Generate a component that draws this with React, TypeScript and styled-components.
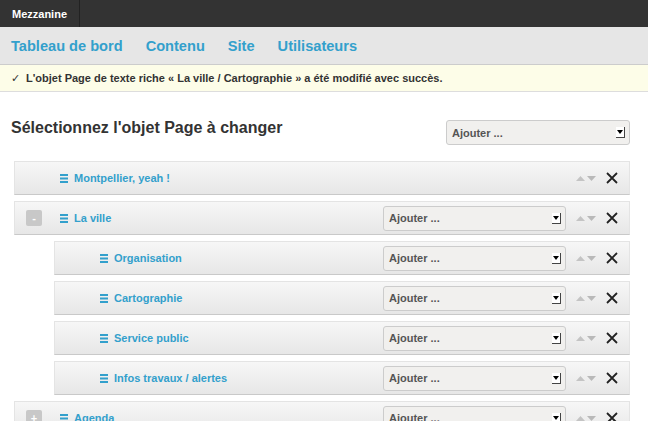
import React from "react";
import styled, { createGlobalStyle } from "styled-components";

const GlobalStyle = createGlobalStyle`
  html, body {
    margin: 0;
    padding: 0;
    background: #fff;
    font-family: "Liberation Sans", Arial, sans-serif;
  }
`;

const LINK = "#33a0cc";

const TopBar = styled.div`
  height: 27px;
  background: #333;
  display: flex;
  align-items: stretch;
`;

const Brand = styled.div`
  display: flex;
  align-items: center;
  padding: 0 12px;
  color: #fff;
  font-size: 11px;
  font-weight: bold;
  border-right: 1px solid #222;
`;

const Nav = styled.div`
  height: 37px;
  background: #e6e6e6;
  border-bottom: 1px solid #ccc;
  display: flex;
  align-items: center;
  padding: 0 11px;
  gap: 23px;
`;

const NavLink = styled.a`
  color: ${LINK};
  font-size: 14.6px;
  font-weight: bold;
  text-decoration: none;
`;

const Message = styled.div`
  height: 26px;
  background: #fdfde8;
  border-bottom: 1px solid #ddd;
  display: flex;
  align-items: center;
  padding: 0 11px;
  font-size: 11px;
  font-weight: bold;
  color: #333;
`;

const Check = styled.span`
  font-weight: normal;
  margin-right: 6px;
`;

const Header = styled.div`
  display: flex;
  align-items: flex-start;
  justify-content: space-between;
  padding: 28px 18px 0 11px;
`;

const Title = styled.h1`
  margin: -1px 0 0;
  font-size: 16px;
  line-height: 18px;
  font-weight: bold;
  color: #333;
`;

const Select = styled.div<{ $width: number }>`
  width: ${(p) => p.$width}px;
  height: 25px;
  box-sizing: border-box;
  border: 1px solid #ccc;
  border-radius: 3px;
  background: #f1f0ee;
  display: flex;
  align-items: center;
  justify-content: space-between;
  padding: 0 4px 0 5px;
  font-size: 11px;
  font-weight: bold;
  color: #555;
`;

const SelectArrow = styled.span`
  width: 9px;
  height: 11px;
  box-sizing: border-box;
  background: #fff;
  border-right: 1px solid #444;
  border-bottom: 1px solid #444;
  display: flex;
  align-items: center;
  justify-content: center;
  &::after {
    content: "";
    border-left: 3px solid transparent;
    border-right: 3px solid transparent;
    border-top: 4px solid #000;
  }
`;

const List = styled.div`
  padding: 16px 18px 0 14px;
  display: flex;
  flex-direction: column;
  gap: 6px;
`;

const Row = styled.div<{ $level: number }>`
  margin-left: ${(p) => p.$level * 40}px;
  height: 34px;
  box-sizing: border-box;
  border: 1px solid #e4e4e4;
  border-bottom-color: #c9c9c9;
  background: linear-gradient(#f7f7f7, #e7e7e7);
  display: flex;
  align-items: center;
  padding: 0 11px 0 11px;
`;

const Toggle = styled.span<{ $visible: boolean }>`
  width: 16px;
  height: 16px;
  border-radius: 2px;
  background: ${(p) => (p.$visible ? "#c8c8c8" : "transparent")};
  color: #fff;
  font-size: 11px;
  font-weight: bold;
  display: flex;
  align-items: center;
  justify-content: center;
  margin-right: 18px;
  flex-shrink: 0;
`;

const Name = styled.a`
  display: flex;
  align-items: center;
  gap: 6px;
  color: ${LINK};
  font-size: 11px;
  font-weight: bold;
  text-decoration: none;
  flex: 1;
`;

const Controls = styled.div`
  display: flex;
  align-items: center;
`;

const Arrows = styled.span`
  display: flex;
  align-items: center;
  gap: 2px;
  margin: 0 10px 0 10px;
`;

const Close = styled.svg`
  display: block;
`;

const Burger = () => (
  <svg width="8" height="9" viewBox="0 0 8 9">
    <rect x="0" y="0" width="8" height="2" fill={LINK} />
    <rect x="0" y="3.5" width="8" height="2" fill={LINK} />
    <rect x="0" y="7" width="8" height="2" fill={LINK} />
  </svg>
);

const UpDown = () => (
  <Arrows>
    <svg width="9" height="5" viewBox="0 0 9 5">
      <polygon points="0,5 4.5,0 9,5" fill="#c4c4c4" />
    </svg>
    <svg width="9" height="5" viewBox="0 0 9 5">
      <polygon points="0,0 9,0 4.5,5" fill="#b9b9b9" />
    </svg>
  </Arrows>
);

const items = [
  { name: "Montpellier, yeah !", level: 0, toggle: "", select: false },
  { name: "La ville", level: 0, toggle: "-", select: true },
  { name: "Organisation", level: 1, toggle: "", select: true },
  { name: "Cartographie", level: 1, toggle: "", select: true },
  { name: "Service public", level: 1, toggle: "", select: true },
  { name: "Infos travaux / alertes", level: 1, toggle: "", select: true },
  { name: "Agenda", level: 0, toggle: "+", select: true },
];

const App = () => (
  <>
    <GlobalStyle />
    <TopBar>
      <Brand>Mezzanine</Brand>
    </TopBar>
    <Nav>
      <NavLink>Tableau de bord</NavLink>
      <NavLink>Contenu</NavLink>
      <NavLink>Site</NavLink>
      <NavLink>Utilisateurs</NavLink>
    </Nav>
    <Message>
      <Check>✓</Check>
      L'objet Page de texte riche « La ville / Cartographie » a été modifié avec succès.
    </Message>
    <Header>
      <Title>Sélectionnez l'objet Page à changer</Title>
      <Select $width={184}>
        Ajouter ...
        <SelectArrow />
      </Select>
    </Header>
    <List>
      {items.map((item) => (
        <Row key={item.name} $level={item.level}>
          <Toggle $visible={item.toggle !== ""}>{item.toggle}</Toggle>
          <Name>
            <Burger />
            {item.name}
          </Name>
          <Controls>
            {item.select && (
              <Select $width={183}>
                Ajouter ...
                <SelectArrow />
              </Select>
            )}
            <UpDown />
            <Close width="12" height="12" viewBox="0 0 12 12">
              <path d="M1 1 L11 11 M11 1 L1 11" stroke="#222" strokeWidth="1.8" />
            </Close>
          </Controls>
        </Row>
      ))}
    </List>
  </>
);

export default App;
